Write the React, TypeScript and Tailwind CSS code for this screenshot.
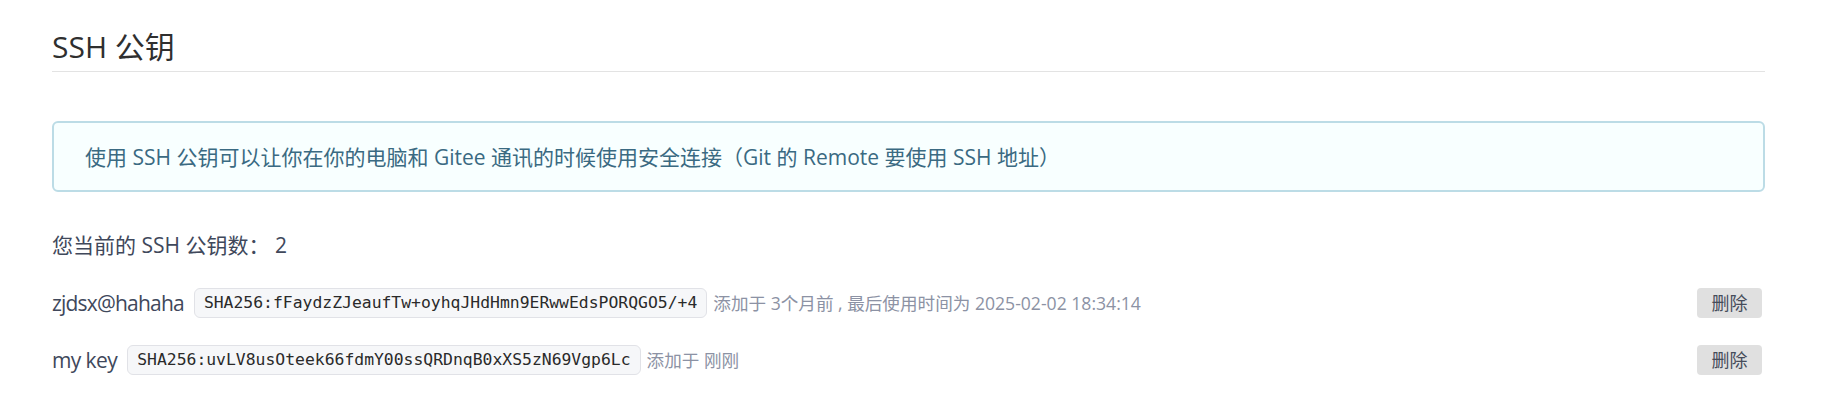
import React from "react";

const SANS = "font-['Open_Sans','Noto_Sans_CJK_SC',sans-serif]";

type Key = { name: string; fp: string; meta: string; nameTrack: string };

const keys: Key[] = [
  {
    name: "zjdsx@hahaha",
    fp: "SHA256:fFaydzZJeaufTw+oyhqJHdHmn9ERwwEdsPORQGO5/+4",
    meta: "添加于 3个月前 , 最后使用时间为 2025-02-02 18:34:14",
    nameTrack: "tracking-[-0.8px]",
  },
  {
    name: "my key",
    fp: "SHA256:uvLV8usOteek66fdmY00ssQRDnqB0xXS5zN69Vgp6Lc",
    meta: "添加于 刚刚",
    nameTrack: "tracking-[-0.6px]",
  },
];

function KeyRow({ k, first }: { k: Key; first: boolean }) {
  return (
    <div className={`flex h-[30px] items-center ${first ? "mt-[28px]" : "mt-[27px]"}`}>
      <span className={`text-[21px] leading-[30px] text-[#40485b] ${k.nameTrack}`}>{k.name}</span>
      <span className="ml-[10px] flex h-[30px] items-center rounded-[6px] border border-[#e1e2e7] bg-[#f6f7f9] px-[9px] font-['DejaVu_Sans_Mono',monospace] text-[16.4px] text-[#2a2a2a]">
        {k.fp}
      </span>
      <span className="ml-[6px] text-[17.6px] leading-[30px] text-[#8c92a4]">{k.meta}</span>
      <button className="ml-auto mr-[3px] flex h-[30px] w-[65px] items-center justify-center rounded-[4px] bg-[#e0e0e0] text-[18px] text-[#464c5a]">
        删除
      </button>
    </div>
  );
}

export default function App() {
  return (
    <div className={`h-[420px] w-[1830px] bg-white pl-[52px] pr-[65px] ${SANS}`}>
      <div className="pt-[27px]">
        <h3 className="h-[40px] text-[30px] font-normal leading-[40px] text-[#2f2f2f]">SSH 公钥</h3>
        <div className="mt-[4px] h-px bg-[#e3e3e3]" />
      </div>

      <div className="mt-[49px] flex h-[71px] items-center rounded-[6px] border-2 border-[#bcdce6] bg-[#f8ffff] pl-[31px]">
        <p className="text-[21px] leading-[30px] text-[#3a6a82]">
          使用 SSH 公钥可以让你在你的电脑和 Gitee 通讯的时候使用安全连接（Git 的 Remote 要使用 SSH 地址）
        </p>
      </div>

      <div className="mt-[38px] h-[30px] text-[21px] leading-[30px] text-[#40485b]">
        您当前的 SSH 公钥数： 2
      </div>

      {keys.map((k, i) => (
        <KeyRow key={k.name} k={k} first={i === 0} />
      ))}
    </div>
  );
}
